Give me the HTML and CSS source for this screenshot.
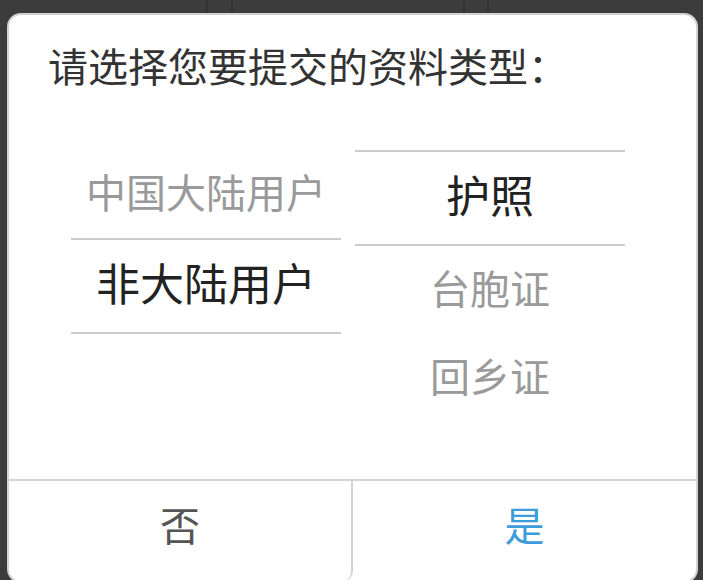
FILE: index.html
```html
<!DOCTYPE html>
<html lang="zh-CN">
<head>
  <meta charset="UTF-8" />
  <meta name="viewport" content="width=device-width, initial-scale=1.0"/>
  <title>资料类型</title>
  <link rel="stylesheet" href="styles.css">
</head>
<body>
  <div class="dialog">
    <div class="dialog-title">请选择您要提交的资料类型：</div>

    <div class="picker">
      <div class="wheel">
        <div class="wheel-item">中国大陆用户</div>
        <div class="wheel-item selected">非大陆用户</div>
      </div>
      <div class="wheel">
        <div class="wheel-item selected">护照</div>
        <div class="wheel-item">台胞证</div>
        <div class="wheel-item">回乡证</div>
      </div>
    </div>

    <div class="dialog-actions">
      <button class="action cancel">否</button>
      <button class="action confirm">是</button>
    </div>
  </div>
</body>
</html>
```

FILE: styles.css
```css
html, body {
  height: 580px;
}

body {
  margin: 0;
  padding-top: 13px;
  box-sizing: border-box;
  overflow: hidden;
  font-family: "Noto Sans CJK SC", "Noto Sans", sans-serif;
  background-color: #3c3c3c;
  background-image:
    linear-gradient(90deg, transparent 206px, #333 206px, #333 208px, transparent 208px),
    linear-gradient(90deg, transparent 231px, #353535 231px, #353535 233px, transparent 233px),
    linear-gradient(90deg, transparent 463px, #333 463px, #333 465px, transparent 465px),
    linear-gradient(90deg, transparent 487px, #353535 487px, #353535 489px, transparent 489px);
}

.dialog {
  margin-left: 7px;
  width: 691px;
  height: 570px;
  box-sizing: border-box;
  background-color: #fff;
  border: 2px solid #d2d2d2;
  border-radius: 14px;
  display: flex;
  flex-direction: column;
  overflow: hidden;
}

.dialog-title {
  padding: 22px 0 3px 39px;
  font-size: 40px;
  line-height: 56px;
  color: #333;
}

.picker {
  flex: 1;
  display: flex;
  gap: 14px;
  margin-top: 54px;
  padding-left: 62px;
}

.wheel {
  width: 270px;
  display: flex;
  flex-direction: column;
}

.wheel-item {
  height: 88px;
  line-height: 82px;
  text-align: center;
  font-size: 40px;
  color: #9a9a9a;
}

.wheel-item.selected {
  height: 96px;
  line-height: 84px;
  box-sizing: border-box;
  font-size: 44px;
  color: #222;
  border-top: 2px solid #cccccc;
  border-bottom: 2px solid #cccccc;
}

.dialog-actions {
  height: 102px;
  display: flex;
  border-top: 2px solid #d4d4d4;
  box-sizing: border-box;
}

.action {
  flex: 1;
  background: none;
  border: none;
  padding: 0 0 14px;
  font-family: inherit;
  font-size: 40px;
  color: #555;
  cursor: pointer;
}

.action.cancel {
  flex: 0 0 344px;
  border-right: 2px solid #d4d4d4;
  border-bottom-right-radius: 10px;
}

.action.confirm {
  color: #3d9ddb;
}
```
